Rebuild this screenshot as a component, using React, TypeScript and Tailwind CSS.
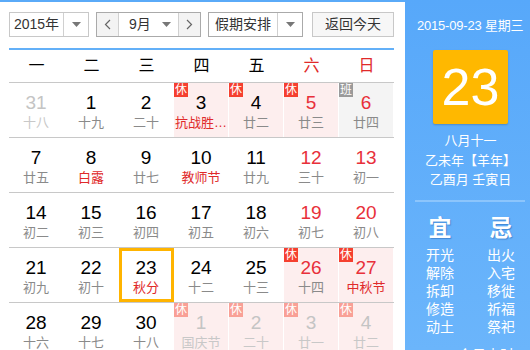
import React from 'react';

type Day = {
  n: number;
  sub: string;
  other?: boolean;
  weekend?: boolean;
  redSub?: boolean;
  tag?: '休' | '班';
  today?: boolean;
};

const weeks: Day[][] = [
  [
    { n: 31, sub: '十八', other: true },
    { n: 1, sub: '十九' },
    { n: 2, sub: '二十' },
    { n: 3, sub: '抗战胜…', redSub: true, tag: '休' },
    { n: 4, sub: '廿二', tag: '休' },
    { n: 5, sub: '廿三', weekend: true, tag: '休' },
    { n: 6, sub: '廿四', weekend: true, tag: '班' },
  ],
  [
    { n: 7, sub: '廿五' },
    { n: 8, sub: '白露', redSub: true },
    { n: 9, sub: '廿七' },
    { n: 10, sub: '教师节', redSub: true },
    { n: 11, sub: '廿九' },
    { n: 12, sub: '三十', weekend: true },
    { n: 13, sub: '初一', weekend: true },
  ],
  [
    { n: 14, sub: '初二' },
    { n: 15, sub: '初三' },
    { n: 16, sub: '初四' },
    { n: 17, sub: '初五' },
    { n: 18, sub: '初六' },
    { n: 19, sub: '初七', weekend: true },
    { n: 20, sub: '初八', weekend: true },
  ],
  [
    { n: 21, sub: '初九' },
    { n: 22, sub: '初十' },
    { n: 23, sub: '秋分', redSub: true, today: true },
    { n: 24, sub: '十二' },
    { n: 25, sub: '十三' },
    { n: 26, sub: '十四', weekend: true, tag: '休' },
    { n: 27, sub: '中秋节', weekend: true, redSub: true, tag: '休' },
  ],
  [
    { n: 28, sub: '十六' },
    { n: 29, sub: '十七' },
    { n: 30, sub: '十八' },
    { n: 1, sub: '国庆节', other: true, tag: '休' },
    { n: 2, sub: '二十', other: true, tag: '休' },
    { n: 3, sub: '廿一', other: true, tag: '休' },
    { n: 4, sub: '廿二', other: true, tag: '休' },
  ],
];

const font = { fontFamily: '"Liberation Sans", Arial, "Noto Sans CJK SC", sans-serif' };

const Caret = () => (
  <svg width="9" height="5" viewBox="0 0 9 5" className="shrink-0">
    <path d="M0 0h9L4.5 5z" fill="#777" />
  </svg>
);

const Chevron = ({ dir }: { dir: 'l' | 'r' }) => (
  <svg width="7" height="11" viewBox="0 0 7 11" fill="none" stroke="#666" strokeWidth="1.2">
    {dir === 'l' ? <path d="M6 1L1.5 5.5 6 10" /> : <path d="M1 1l4.5 4.5L1 10" />}
  </svg>
);

const DayCell = ({ d }: { d: Day }) => {
  const bg = d.tag === '班' ? 'bg-[#f4f4f4]' : d.tag ? 'bg-[#fdeeee]' : 'bg-white';
  const numColor = d.other ? 'text-[#c4c4c4]' : d.weekend ? 'text-[#e8303a]' : 'text-black';
  const subColor = d.other ? 'text-[#c8c8c8]' : d.redSub ? 'text-[#e02a2a]' : 'text-[#8a8a8a]';
  const tagBg = d.tag === '班' ? 'bg-[#9a9a9a]' : d.other ? 'bg-[#f9a096]' : 'bg-[#f5402f]';
  return (
    <div className={`relative h-[54px] border-r border-white ${bg} flex flex-col items-center pt-[10px]`}>
      {d.tag && (
        <div className={`absolute left-0 top-0 w-[14px] h-[14px] ${tagBg} text-white text-[12px] leading-[14px] text-center`}>
          {d.tag}
        </div>
      )}
      <div className={`text-[19px] leading-[20px] ${numColor}`}>{d.n}</div>
      <div className={`text-[13px] leading-[17px] mt-[1px] whitespace-nowrap ${subColor}`}>{d.sub}</div>
      {d.today && <div className="absolute inset-0 -right-px border-[3px] border-[#ffb400]" />}
    </div>
  );
};

export default function App() {
  return (
    <div className="flex w-[530px] h-[350px] overflow-hidden bg-white" style={font}>
      <div className="w-[405px] shrink-0 border-t-2 border-[#5aaaf8] pl-[9px] pr-[11px]">
        <div className="flex h-[25px] mt-[10px] text-[14px] text-[#333] whitespace-nowrap">
          <div className="flex w-[80px] border border-[#c8c8c8]">
            <div className="flex-1 flex items-center justify-center border-r border-[#d0d0d0]">2015年</div>
            <div className="w-[24px] flex items-center justify-center"><Caret /></div>
          </div>
          <div className="flex w-[105px] ml-[7px] border border-[#aaa]">
            <div className="w-[22px] bg-[#f3f3f3] flex items-center justify-center border-r border-[#d0d0d0]"><Chevron dir="l" /></div>
            <div className="flex-1 flex items-center justify-between pl-[10px] pr-[7px]">
              <span>9月</span>
              <Caret />
            </div>
            <div className="w-[22px] bg-[#f3f3f3] flex items-center justify-center border-l border-[#d0d0d0]"><Chevron dir="r" /></div>
          </div>
          <div className="flex w-[95px] ml-[7px] border border-[#aaa]">
            <div className="flex-1 flex items-center justify-center border-r border-[#d0d0d0]">假期安排</div>
            <div className="w-[24px] flex items-center justify-center"><Caret /></div>
          </div>
          <div className="w-[82px] ml-[9px] border border-[#c8c8c8] bg-[#f7f7f7] flex items-center justify-center">返回今天</div>
        </div>
        <div className="h-[2px] bg-[#63b0f8] mt-[11px]" />
        <div className="grid grid-cols-7 h-[33px] border-b border-[#c8c8c8] text-[16px] items-center text-center">
          {['一', '二', '三', '四', '五', '六', '日'].map((w, i) => (
            <div key={w} className={i > 4 ? 'text-[#e02a2a]' : 'text-black'}>{w}</div>
          ))}
        </div>
        {weeks.map((row, i) => (
          <div key={i} className="grid grid-cols-7 border-b border-[#c8c8c8]">
            {row.map((d, j) => (
              <DayCell key={j} d={d} />
            ))}
          </div>
        ))}
      </div>
      <div className="w-[125px] shrink-0 bg-gradient-to-b from-[#57a8fa] to-[#6bb5fb] text-white flex flex-col">
        <div className="shrink-0 mt-[17px] pl-[12px] text-[13px] leading-[18px] tracking-[-0.2px] whitespace-nowrap">
          2015-09-23 星期三
        </div>
        <div className="shrink-0 mt-[15px] ml-[28px] w-[75px] h-[74px] rounded-[2px] bg-[#ffb800] shadow-[0_1px_2px_rgba(0,0,0,0.2)] flex items-center justify-center text-[52px] leading-none">
          23
        </div>
        <div className="shrink-0 mt-[7px] pl-[6px] text-[13px] leading-[19.5px] text-center whitespace-nowrap">
          <div>八月十一</div>
          <div>乙未年【羊年】</div>
          <div>乙酉月 壬寅日</div>
        </div>
        <div className="shrink-0 mt-[10px] ml-[10px] w-[110px] h-[2px] bg-[#8cc5fc]" />
        <div className="shrink-0 mt-[12px] flex justify-center gap-[33px] pl-[6px]">
          {[
            { h: '宜', items: ['开光', '解除', '拆卸', '修造', '动土'] },
            { h: '忌', items: ['出火', '入宅', '移徙', '祈福', '祭祀'] },
          ].map((c) => (
            <div key={c.h} className="flex flex-col items-center">
              <div className="text-[23px] leading-[28px] font-bold [text-shadow:1px_1px_1px_rgba(0,60,140,0.35)]">{c.h}</div>
              <div className="mt-[4px] text-[14px] leading-[18px] flex flex-col items-center">
                {c.items.map((t) => (
                  <div key={t}>{t}</div>
                ))}
              </div>
            </div>
          ))}
        </div>
        <div className="shrink-0 mt-[10px] pl-[53px] text-[14px] leading-[18px] whitespace-nowrap">今日吉时</div>
      </div>
    </div>
  );
}
